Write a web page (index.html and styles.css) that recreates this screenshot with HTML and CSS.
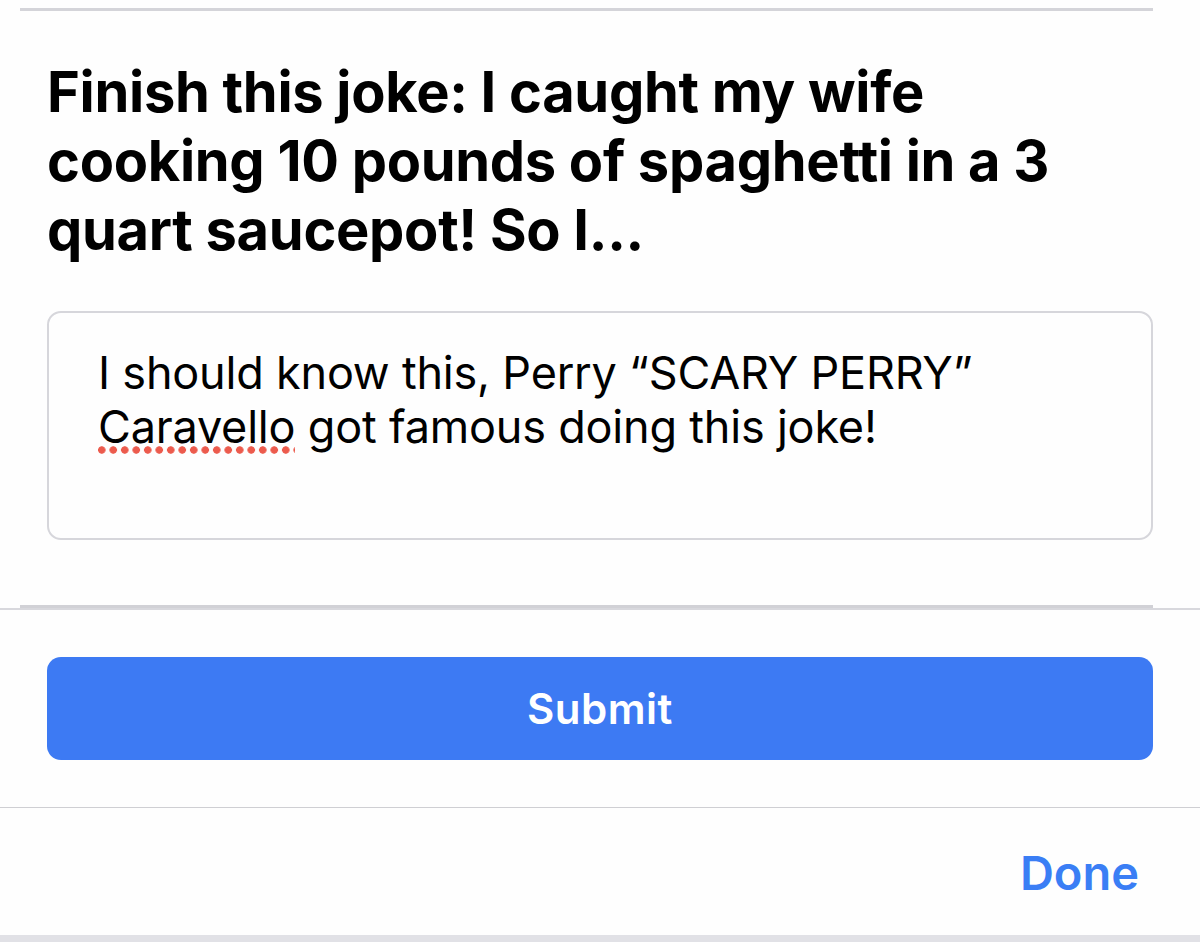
FILE: index.html
```html
<!DOCTYPE html>
<html lang="en">
  <head>
    <meta charset="UTF-8" />
    <meta name="viewport" content="width=device-width, initial-scale=1.0" />
    <title>Finish this joke</title>
    <link rel="stylesheet" href="styles.css">
  </head>
  <body>
    <div class="prompt-card">
      <h1>Finish this joke: I caught my wife cooking 10 pounds of spaghetti in a 3 quart saucepot! So I...</h1>
      <div class="answer-box">
        I should know this, Perry “SCARY PERRY” <span class="misspelled">Caravello</span> got famous doing this joke!
      </div>
    </div>
    <div class="rule"></div>

    <div class="submit-row">
      <button class="submit-btn">Submit</button>
    </div>

    <!-- Keyboard accessory bar -->
    <div class="accessory-bar">
      <button class="done-btn">Done</button>
    </div>
    <div class="keyboard-edge"></div>
  </body>
</html>
```

FILE: styles.css
```css
/* General styles */
html,
body {
  margin: 0;
  padding: 0;
  background-color: #fefefe;
  color: #000;
  font-family: Inter, "Noto Sans", Arial, sans-serif;
  height: 100%;
  overflow: hidden;
}

/* Question card */
.prompt-card {
  margin: 8px 47px 0 20px;
  padding: 0 0 65px 27px;
  border-top: 3px solid #d4d4d9;
  border-bottom: 3px solid #d1d1d6;
}
.prompt-card h1 {
  margin: 47px 0 46px 0;
  font-size: 56px;
  line-height: 69px;
  font-weight: 700;
  letter-spacing: -0.3px;
}
.answer-box {
  box-sizing: border-box;
  height: 229px;
  padding: 33px 40px 0 49px;
  border: 2px solid #d6d6db;
  border-radius: 14px;
  font-size: 45px;
  line-height: 54px;
  letter-spacing: -0.2px;
}
/* red dotted spell-check underline */
.misspelled {
  padding-bottom: 0;
  background-image: radial-gradient(circle, #ec5b4d 3.4px, transparent 4px);
  background-size: 11.5px 8px;
  background-repeat: repeat-x;
  background-position: -2px bottom;
}
.rule {
  height: 2px;
  background-color: #d8d8dd;
}

/* Submit */
.submit-row {
  padding: 47px 47px;
  border-bottom: 1px solid #cfcfd3;
}
.submit-btn {
  display: block;
  width: 100%;
  height: 103px;
  border: none;
  border-radius: 14px;
  background-color: #3d7af3;
  color: #fff;
  font-family: inherit;
  font-size: 42px;
  font-weight: 600;
  letter-spacing: 0.5px;
}

/* Accessory bar */
.accessory-bar {
  height: 127px;
  display: flex;
  justify-content: flex-end;
  align-items: center;
  padding-right: 61px;
}
.done-btn {
  margin-top: 2px;
  border: none;
  background: none;
  padding: 0;
  color: #3a7ef5;
  font-family: inherit;
  font-size: 47px;
  font-weight: 600;
}
.keyboard-edge {
  height: 7px;
  background-color: #e1e1e6;
}
```
